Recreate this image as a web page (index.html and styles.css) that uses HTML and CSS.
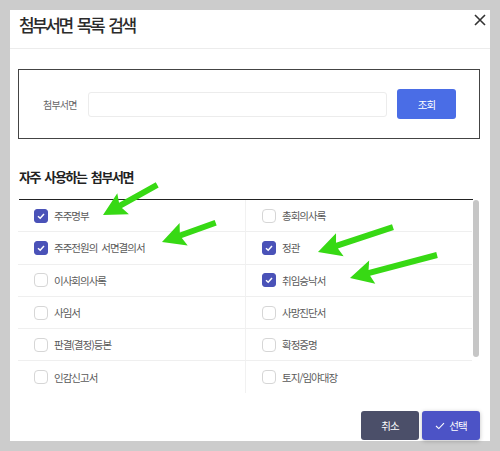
FILE: index.html
```html
<!DOCTYPE html>
<html lang="ko">
<head>
<meta charset="utf-8">
<title>첨부서면 목록 검색</title>
<link rel="stylesheet" href="styles.css">
</head>
<body>
<div class="dialog">
  <div class="header">
    <h1 class="title">첨부서면 목록 검색</h1>
    <span class="close">
      <svg width="12" height="12" viewBox="0 0 12 12"><path d="M1 1 L11 11 M11 1 L1 11" stroke="#333" stroke-width="1.6" fill="none"/></svg>
    </span>
  </div>
  <div class="content">
    <div class="search">
      <span class="search-label">첨부서면</span>
      <div class="search-input"></div>
      <button class="btn btn-search">조회</button>
    </div>
    <h2 class="section-title">자주 사용하는 첨부서면</h2>
    <div class="list-wrap">
      <div class="list">
        <div class="item"><span class="cb checked"><svg width="10" height="10" viewBox="0 0 10 10"><path d="M2 5.2 L4.2 7.2 L8 3" stroke="#fff" stroke-width="1.5" fill="none"/></svg></span><span class="label">주주명부</span></div>
        <div class="item"><span class="cb"></span><span class="label">총회의사록</span></div>
        <div class="item"><span class="cb checked"><svg width="10" height="10" viewBox="0 0 10 10"><path d="M2 5.2 L4.2 7.2 L8 3" stroke="#fff" stroke-width="1.5" fill="none"/></svg></span><span class="label">주주전원의 서면결의서</span></div>
        <div class="item"><span class="cb checked"><svg width="10" height="10" viewBox="0 0 10 10"><path d="M2 5.2 L4.2 7.2 L8 3" stroke="#fff" stroke-width="1.5" fill="none"/></svg></span><span class="label">정관</span></div>
        <div class="item"><span class="cb"></span><span class="label">이사회의사록</span></div>
        <div class="item"><span class="cb checked"><svg width="10" height="10" viewBox="0 0 10 10"><path d="M2 5.2 L4.2 7.2 L8 3" stroke="#fff" stroke-width="1.5" fill="none"/></svg></span><span class="label">취임승낙서</span></div>
        <div class="item"><span class="cb"></span><span class="label">사임서</span></div>
        <div class="item"><span class="cb"></span><span class="label">사망진단서</span></div>
        <div class="item"><span class="cb"></span><span class="label">판결(결정)등본</span></div>
        <div class="item"><span class="cb"></span><span class="label">확정증명</span></div>
        <div class="item"><span class="cb"></span><span class="label">인감신고서</span></div>
        <div class="item"><span class="cb"></span><span class="label">토지/임야대장</span></div>
      </div>
      <div class="scrollbar"><div class="thumb"></div></div>
    </div>
  </div>
  <div class="footer">
    <button class="btn btn-cancel">취소</button>
    <button class="btn btn-select"><svg width="10" height="8" viewBox="0 0 10 8"><path d="M1 4 L3.8 6.6 L9 1.2" stroke="#fff" stroke-width="1.1" fill="none"/></svg>선택</button>
  </div>
</div>
<svg class="arrows" width="500" height="451" viewBox="0 0 500 451">
  <g fill="#37d914">
    <polygon transform="translate(103 215) rotate(-29)" points="0,0 23,-12 20,-3 62,-3 62,3 20,3 23,12"/>
    <polygon transform="translate(162 242) rotate(-19.7)" points="0,0 23,-12 20,-3 57,-3 57,3 20,3 23,12"/>
    <polygon transform="translate(318 252) rotate(-18.4)" points="0,0 23,-12 20,-3 79,-3 79,3 20,3 23,12"/>
    <polygon transform="translate(350 278) rotate(-14.8)" points="0,0 23,-12 20,-3 90,-3 90,3 20,3 23,12"/>
  </g>
</svg>
</body>
</html>
```

FILE: styles.css
```css
* { box-sizing: border-box; }
html, body { margin: 0; padding: 0; }
body {
  background: #cccccc;
  width: 500px;
  height: 451px;
  overflow: hidden;
  font-family: "Noto Sans CJK KR", "Noto Sans", sans-serif;
  color: #333;
  position: relative;
}
.dialog {
  position: relative;
  margin: 10px;
  width: 480px;
  height: 431px;
  background: #fff;
  display: flex;
  flex-direction: column;
}
.header {
  height: 39px;
  border-bottom: 1px solid #ececec;
  display: flex;
  justify-content: space-between;
  align-items: flex-start;
  padding: 0 4px 0 9px;
}
.title {
  margin: 0;
  font-size: 17px;
  font-weight: 500;
  letter-spacing: -2.5px;
  word-spacing: 3px;
  line-height: 26px;
  padding-top: 2px;
  color: #2b2b2b;
}
.close {
  display: flex;
  margin-top: 4px;
  width: 12px;
  height: 12px;
}
.content {
  padding: 20px 10px 0 8px;
}
.search {
  height: 70px;
  border: 1.5px solid #444;
  display: flex;
  align-items: center;
  padding: 0 23px 0 24px;
}
.search-label {
  font-size: 10px;
  color: #666;
  letter-spacing: -0.8px;
  width: 45px;
}
.search-input {
  flex: 1;
  height: 25px;
  border: 1px solid #ececec;
  border-radius: 3px;
  margin-right: 10px;
}
.btn {
  border: none;
  font-family: inherit;
  color: #fff;
  font-size: 10.5px;
  letter-spacing: -0.8px;
  border-radius: 3px;
  cursor: pointer;
  padding: 0;
}
.btn-search {
  width: 59px;
  height: 30px;
  background: #4a6de6;
}
.section-title {
  margin: 27px 0 0 1px;
  font-size: 13px;
  font-weight: 700;
  letter-spacing: -1.4px;
  word-spacing: 2px;
  line-height: 22px;
  color: #222;
  height: 34px;
  border-bottom: 1px solid #222;
  width: 454px;
}
.list-wrap {
  display: flex;
  height: 193px;
  overflow: hidden;
}
.list {
  width: 454px;
  display: grid;
  grid-template-columns: 228px 226px;
  grid-auto-rows: 32.3px;
  align-content: start;
}
.item {
  display: flex;
  align-items: center;
  padding-left: 16px;
  border-bottom: 1px solid #efefef;
}
.item:nth-child(odd) {
  border-right: 1px solid #f1f1f1;
}
.cb {
  width: 14px;
  height: 14px;
  border: 1px solid #d6d6d6;
  border-radius: 4px;
  margin-right: 6px;
  display: flex;
  align-items: center;
  justify-content: center;
  flex: none;
}
.cb.checked {
  background: #4a52b8;
  border-color: #4a52b8;
  border-radius: 3px;
}
.label {
  font-size: 10.5px;
  color: #5a5a5a;
  letter-spacing: -1px;
  word-spacing: 2px;
}
.scrollbar {
  width: 8px;
  padding: 0 1px;
}
.thumb {
  width: 6px;
  height: 157px;
  background: #c6c6c6;
  border-radius: 3px;
}
.footer {
  margin-top: auto;
  display: flex;
  justify-content: flex-end;
  gap: 3px;
  padding: 0 10px 1px 0;
}
.btn-cancel {
  width: 58px;
  height: 29px;
  background: #4b4f69;
}
.btn-select {
  width: 58px;
  height: 29px;
  background: #4c53c6;
  box-shadow: 0 1px 4px rgba(0,0,0,0.25);
  display: flex;
  align-items: center;
  justify-content: center;
  gap: 4px;
}
.arrows {
  position: absolute;
  left: 0;
  top: 0;
  pointer-events: none;
}
```
